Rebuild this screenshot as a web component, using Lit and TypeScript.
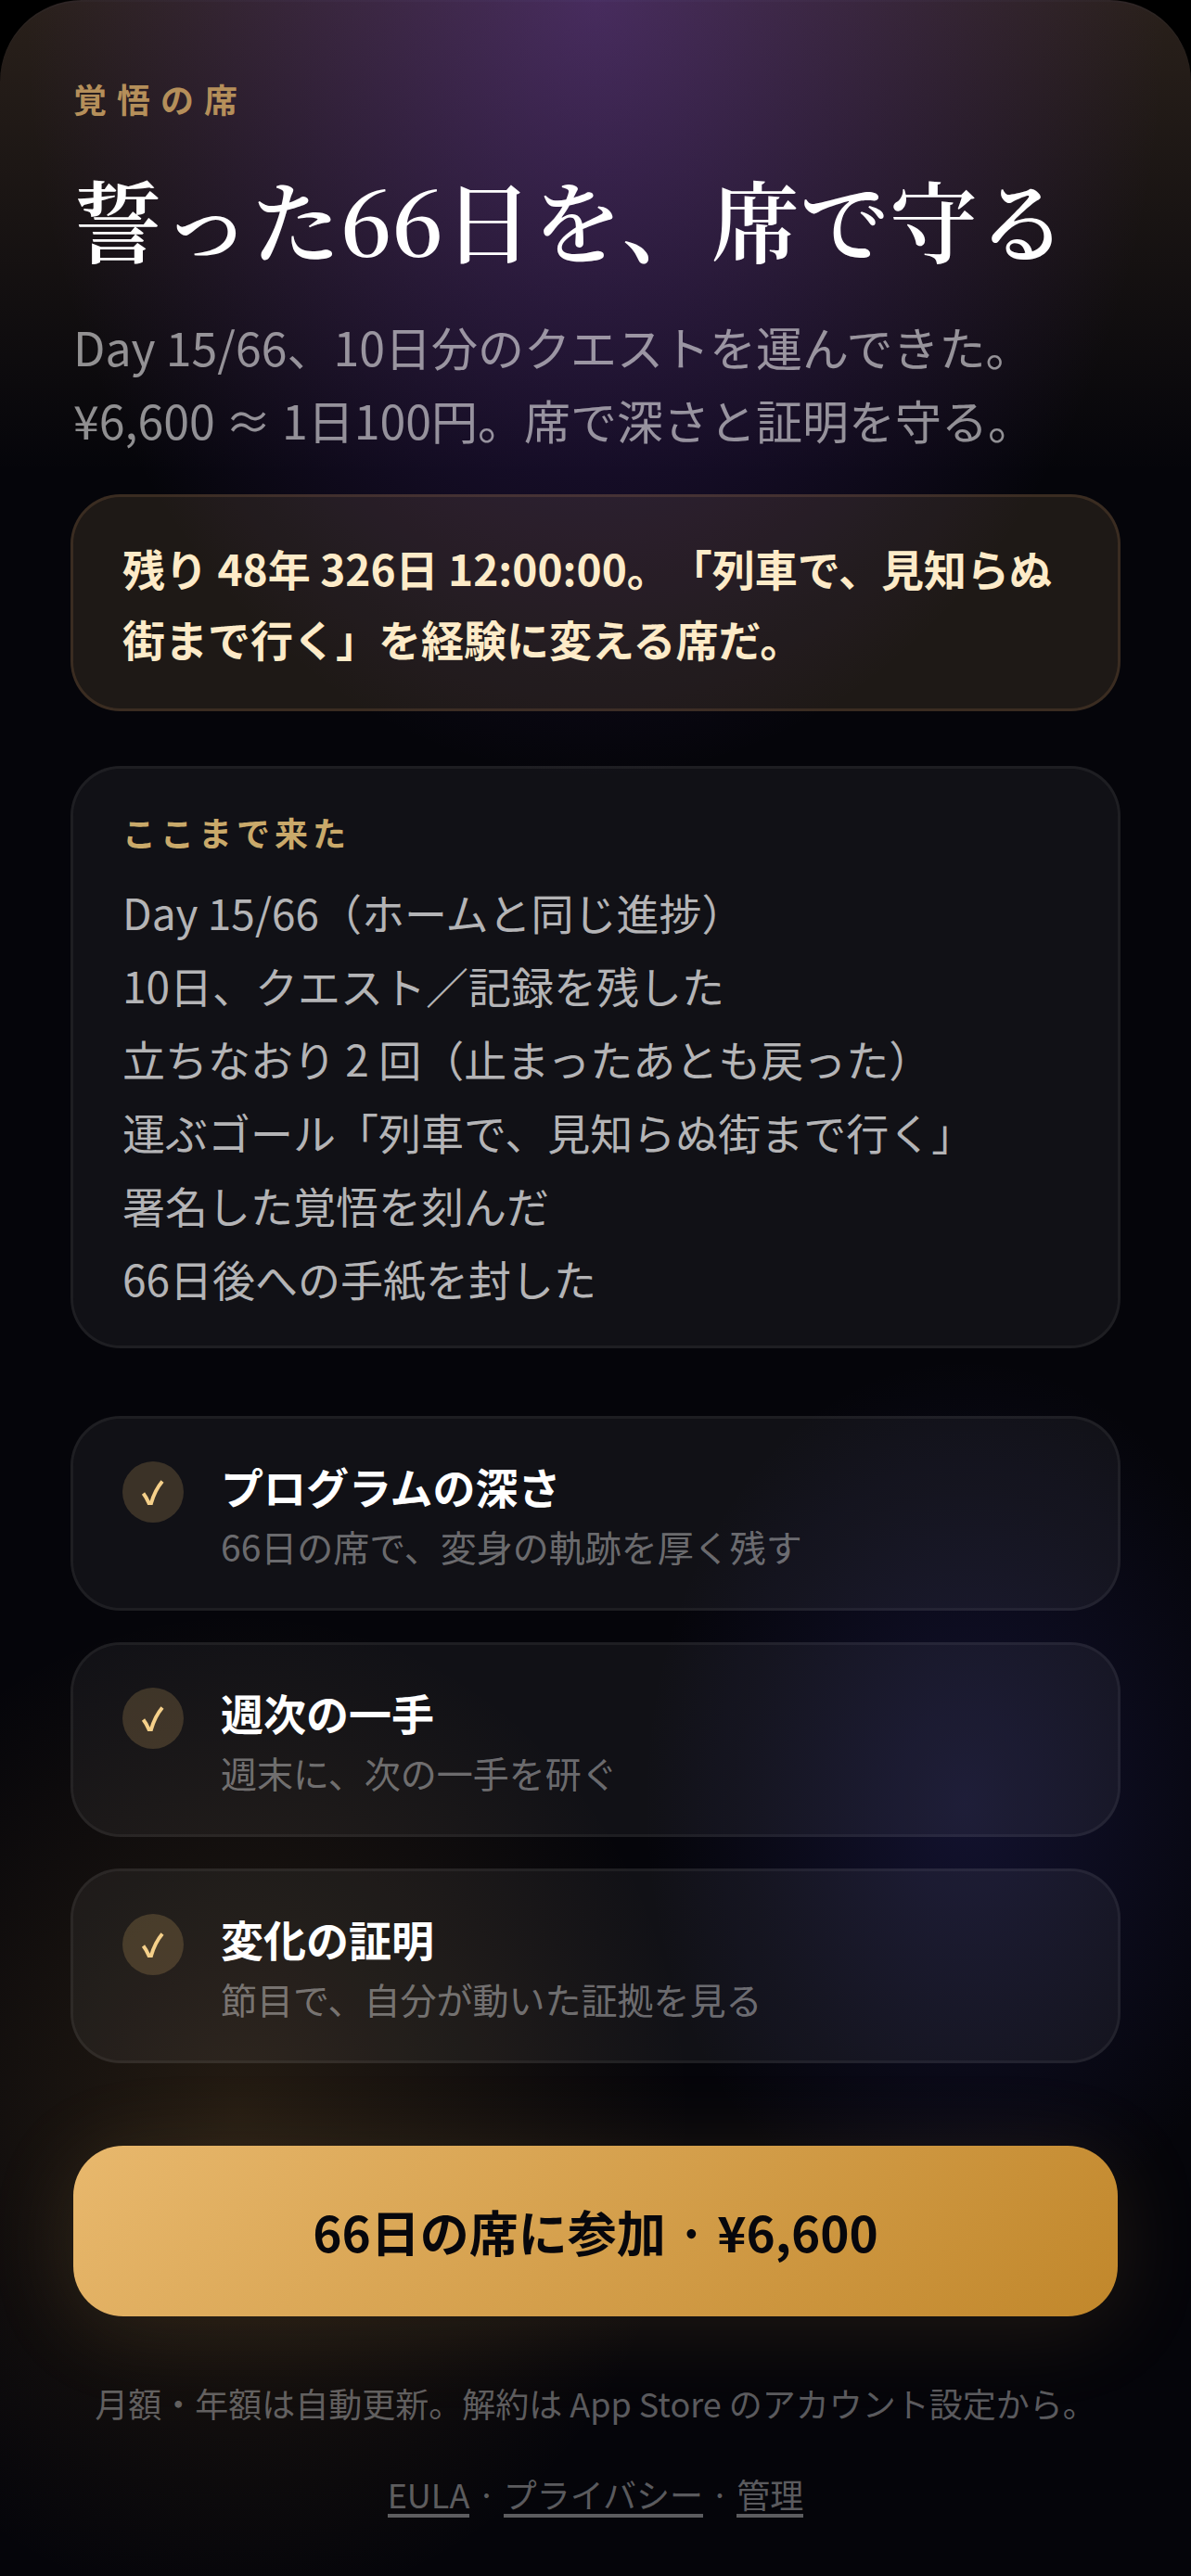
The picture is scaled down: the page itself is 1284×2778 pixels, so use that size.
import { LitElement, html, css } from "lit";
import { customElement, property } from "lit/decorators.js";

const PROGRESS = [
  "Day 15/66（ホームと同じ進捗）",
  "10日、クエスト／記録を残した",
  "立ちなおり 2 回（止まったあとも戻った）",
  "運ぶゴール「列車で、見知らぬ街まで行く」",
  "署名した覚悟を刻んだ",
  "66日後への手紙を封した",
];

const FEATURES = [
  { name: "プログラムの深さ", detail: "66日の席で、変身の軌跡を厚く残す" },
  { name: "週次の一手", detail: "週末に、次の一手を研ぐ" },
  { name: "変化の証明", detail: "節目で、自分が動いた証拠を見る" },
];

@customElement("seat-feature")
class SeatFeature extends LitElement {
  @property() name = "";
  @property() detail = "";

  static styles = css`
    :host {
      display: flex;
      align-items: flex-start;
      gap: 40px;
      padding: 40px 53px 38px;
      border: 3px solid rgba(255, 255, 255, 0.1);
      border-radius: 54px;
      background: rgba(255, 255, 255, 0.05);
      background-clip: padding-box;
    }
    .badge {
      flex: none;
      width: 66px;
      height: 66px;
      margin-top: 6px;
      border-radius: 50%;
      background: rgba(232, 184, 109, 0.2);
    }
    .badge svg {
      display: block;
      width: 100%;
      height: 100%;
    }
    .name {
      margin: 0 0 4px;
      font-size: 46px;
      line-height: 64px;
      font-weight: 700;
      color: #fff;
    }
    .detail {
      margin: 0;
      font-size: 39px;
      line-height: 58px;
      color: rgba(255, 255, 255, 0.4);
    }
  `;

  render() {
    return html`
      <span class="badge">
        <svg viewBox="0 0 66 66" aria-hidden="true">
          <path
            d="M22.5 34.5 Q26 39 28.5 45 H31 Q35 31 43 21.5"
            fill="none"
            stroke="#f5d08a"
            stroke-width="4"
          />
        </svg>
      </span>
      <div>
        <h3 class="name">${this.name}</h3>
        <p class="detail">${this.detail}</p>
      </div>
    `;
  }
}

@customElement("app-root")
class AppRoot extends LitElement {
  static styles = css`
    :host {
      display: block;
      background: #000;
      font-family: "Noto Sans CJK JP", sans-serif;
      text-spacing-trim: space-all;
      color: #fff;
    }
    .sheet {
      display: flex;
      flex-direction: column;
      box-sizing: border-box;
      min-height: 100vh;
      padding: 74px 76px 54px;
      border-radius: 88px 88px 0 0;
      box-shadow: inset 0 2px 0 rgba(160, 200, 255, 0.03);
      background:
        radial-gradient(ellipse 48% 840px at 50% 0, rgba(134, 68, 235, 0.32), transparent),
        radial-gradient(ellipse 27% 480px at 81% 70%, rgba(88, 84, 236, 0.16), transparent),
        radial-gradient(ellipse 38% 540px at 20% 82%, rgba(212, 155, 66, 0.15), transparent),
        linear-gradient(180deg, rgba(222, 168, 108, 0.17), transparent 510px),
        #05050a;
    }
    .intro {
      padding: 0 3px;
    }
    .eyebrow {
      margin: 0;
      font-size: 36px;
      line-height: 64px;
      font-weight: 700;
      letter-spacing: 11px;
      color: #b58f5a;
    }
    .title {
      margin: 27px 0 29px;
      font-family: "Noto Serif CJK JP", "Noto Serif JP", serif;
      font-size: 96px;
      line-height: 140px;
      font-weight: 600;
    }
    .lead {
      margin: 0;
      font-size: 50px;
      line-height: 79px;
      color: rgba(255, 255, 255, 0.55);
    }
    .notice {
      margin: 41px 0 0;
      padding: 38px 53px;
      border: 3px solid rgba(236, 176, 112, 0.23);
      border-radius: 54px;
      background: rgba(238, 188, 126, 0.11);
      background-clip: padding-box;
      font-size: 46px;
      line-height: 76px;
      font-weight: 700;
      color: #fdebc8;
    }
    .progress {
      margin-top: 59px;
      padding: 38px 53px 33px;
      border: 3px solid rgba(255, 255, 255, 0.1);
      border-radius: 54px;
      background: rgba(255, 255, 255, 0.05);
      background-clip: padding-box;
    }
    .progress-title {
      margin: 0 0 17px;
      font-size: 36px;
      line-height: 60px;
      font-weight: 700;
      letter-spacing: 5px;
      color: #c9a96a;
    }
    .progress-list {
      margin: 0;
      padding: 0;
      list-style: none;
      font-size: 46px;
      line-height: 79px;
      color: rgba(255, 255, 255, 0.7);
    }
    .features {
      display: flex;
      flex-direction: column;
      gap: 34px;
      margin-top: 73px;
    }
    .join {
      margin: 89px 3px 0;
      padding: 52px;
      border: 0;
      border-radius: 54px;
      background: linear-gradient(135deg, #e8b86d, #c1872b);
      box-shadow: 0 12px 96px rgba(212, 160, 86, 0.14);
      font-family: inherit;
      font-size: 53px;
      line-height: 80px;
      font-weight: 700;
      color: #07070c;
      cursor: pointer;
    }
    .terms {
      margin: 64px 0 0;
      font-size: 36px;
      line-height: 58px;
      text-align: center;
      color: rgba(255, 255, 255, 0.35);
    }
    .links {
      margin-top: 40px;
      font-size: 36px;
      line-height: 58px;
      text-align: center;
      color: rgba(255, 255, 255, 0.35);
    }
    .links a {
      display: inline-block;
      line-height: 44px;
      border-bottom: 4px solid currentColor;
      color: inherit;
      text-decoration: none;
    }
  `;

  render() {
    return html`
      <main class="sheet">
        <header class="intro">
          <p class="eyebrow">覚悟の席</p>
          <h1 class="title">誓った66日を、席で守る</h1>
          <p class="lead">
            Day 15/66、10日分のクエストを運んできた。<br />¥6,600 ≈ 1日100円。席で深さと証明を守る。
          </p>
        </header>
        <p class="notice">残り 48年 326日 12:00:00。「列車で、見知らぬ街まで行く」を経験に変える席だ。</p>
        <section class="progress">
          <h2 class="progress-title">ここまで来た</h2>
          <ul class="progress-list">
            ${PROGRESS.map((item) => html`<li>${item}</li>`)}
          </ul>
        </section>
        <section class="features">
          ${FEATURES.map(
            (f) => html`<seat-feature .name=${f.name} .detail=${f.detail}></seat-feature>`
          )}
        </section>
        <button class="join" type="button">66日の席に参加 · ¥6,600</button>
        <p class="terms">月額・年額は自動更新。解約は App Store のアカウント設定から。</p>
        <nav class="links"><a href="#eula">EULA</a> · <a href="#privacy">プライバシー</a> · <a href="#manage">管理</a></nav>
      </main>
    `;
  }
}
